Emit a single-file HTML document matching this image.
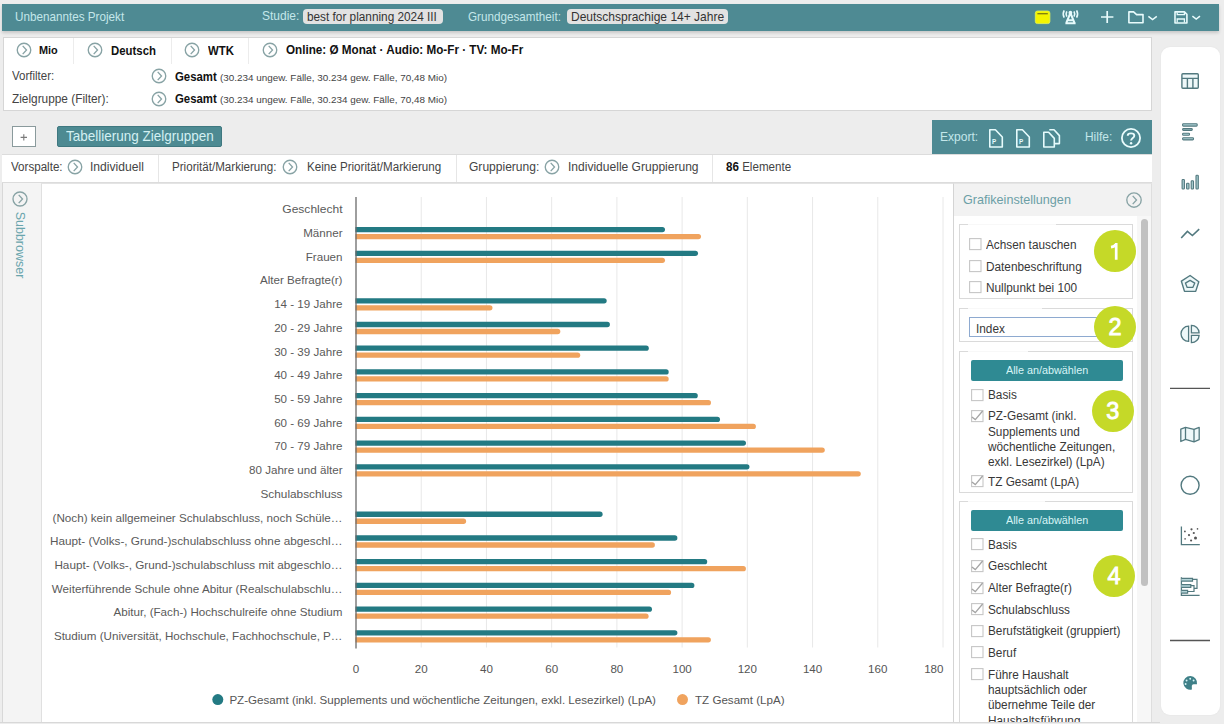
<!DOCTYPE html>
<html><head><meta charset="utf-8">
<style>
*{box-sizing:border-box;margin:0;padding:0}
html,body{width:1224px;height:724px;overflow:hidden;background:#ededed;font-family:"Liberation Sans",sans-serif;color:#333}
.abs{position:absolute}
.t{position:absolute;white-space:nowrap;line-height:1}
</style></head><body>
<div class="abs" style="left:2px;top:4px;width:1217px;height:26.8px;background:#4e8a93;box-shadow:0 2px 3px rgba(0,0,0,0.16)"></div>
<div class="t" style="left:15px;top:10.90px;font-size:12.64px;color:#c4e7ea;font-weight:normal;transform:scaleX(0.9259);transform-origin:0 0;">Unbenanntes Projekt</div>
<div class="t" style="left:262.2px;top:10.43px;font-size:12.96px;color:#c4e7ea;font-weight:normal;transform:scaleX(0.9259);transform-origin:0 0;">Studie:</div>
<div class="abs" style="left:302.6px;top:9px;width:140.4px;height:15px;background:#e2e2e2;border-radius:4px"></div>
<div class="t" style="left:307.3px;top:10.81px;font-size:12.51px;color:#333;font-weight:normal;transform:scaleX(0.9434);transform-origin:0 0;">best for planning 2024 III</div>
<div class="t" style="left:468px;top:10.80px;font-size:12.64px;color:#c4e7ea;font-weight:normal;transform:scaleX(0.9259);transform-origin:0 0;">Grundgesamtheit:</div>
<div class="abs" style="left:566.8px;top:8.7px;width:161.3px;height:15px;background:#e2e2e2;border-radius:4px"></div>
<div class="t" style="left:571.4px;top:10.63px;font-size:12.72px;color:#333;font-weight:normal;transform:scaleX(0.9434);transform-origin:0 0;">Deutschsprachige 14+ Jahre</div>
<div class="abs" style="left:3px;top:37px;width:1149px;height:74px;background:#fff;border:1px solid #d6d6d6"></div>
<div class="abs" style="left:73.0px;top:38px;width:1px;height:26px;background:#ececec"></div>
<div class="abs" style="left:170.9px;top:38px;width:1px;height:26px;background:#ececec"></div>
<div class="abs" style="left:248.1px;top:38px;width:1px;height:26px;background:#ececec"></div>
<svg class="abs" style="left:14.5px;top:40.5px" width="18" height="18" viewBox="0 0 18 18"><circle cx="9" cy="9" r="6.75" fill="none" stroke="#88a3a5" stroke-width="1.35"/><path d="M7.7 4.9 L11.5 9 L7.7 13.1" fill="none" stroke="#88a3a5" stroke-width="1.35" transform="rotate(0 9 9)"/></svg>
<div class="t" style="left:39px;top:45.12px;font-size:11.55px;color:#111;font-weight:bold;transform:scaleX(0.9434);transform-origin:0 0;">Mio</div>
<svg class="abs" style="left:85.6px;top:40.5px" width="18" height="18" viewBox="0 0 18 18"><circle cx="9" cy="9" r="6.75" fill="none" stroke="#88a3a5" stroke-width="1.35"/><path d="M7.7 4.9 L11.5 9 L7.7 13.1" fill="none" stroke="#88a3a5" stroke-width="1.35" transform="rotate(0 9 9)"/></svg>
<div class="t" style="left:110.6px;top:44.67px;font-size:12.08px;color:#111;font-weight:bold;transform:scaleX(0.9434);transform-origin:0 0;">Deutsch</div>
<svg class="abs" style="left:183.3px;top:40.5px" width="18" height="18" viewBox="0 0 18 18"><circle cx="9" cy="9" r="6.75" fill="none" stroke="#88a3a5" stroke-width="1.35"/><path d="M7.7 4.9 L11.5 9 L7.7 13.1" fill="none" stroke="#88a3a5" stroke-width="1.35" transform="rotate(0 9 9)"/></svg>
<div class="t" style="left:208px;top:44.67px;font-size:12.08px;color:#111;font-weight:bold;transform:scaleX(0.9434);transform-origin:0 0;">WTK</div>
<svg class="abs" style="left:260.6px;top:40.5px" width="18" height="18" viewBox="0 0 18 18"><circle cx="9" cy="9" r="6.75" fill="none" stroke="#88a3a5" stroke-width="1.35"/><path d="M7.7 4.9 L11.5 9 L7.7 13.1" fill="none" stroke="#88a3a5" stroke-width="1.35" transform="rotate(0 9 9)"/></svg>
<div class="t" style="left:285.5px;top:44.40px;font-size:12.40px;color:#111;font-weight:bold;transform:scaleX(0.9434);transform-origin:0 0;">Online: Ø Monat · Audio: Mo-Fr · TV: Mo-Fr</div>
<div class="t" style="left:12.2px;top:69.88px;font-size:12.19px;color:#444;font-weight:normal;transform:scaleX(0.9434);transform-origin:0 0;">Vorfilter:</div>
<div class="t" style="left:12.2px;top:92.77px;font-size:12.56px;color:#444;font-weight:normal;transform:scaleX(0.9434);transform-origin:0 0;">Zielgruppe (Filter):</div>
<svg class="abs" style="left:149.6px;top:67.3px" width="18" height="18" viewBox="0 0 18 18"><circle cx="9" cy="9" r="6.75" fill="none" stroke="#88a3a5" stroke-width="1.35"/><path d="M7.7 4.9 L11.5 9 L7.7 13.1" fill="none" stroke="#88a3a5" stroke-width="1.35" transform="rotate(0 9 9)"/></svg>
<div class="t" style="left:174.8px;top:70.87px;font-size:12.08px;color:#111;font-weight:bold;transform:scaleX(0.9434);transform-origin:0 0;">Gesamt</div>
<div class="t" style="left:219.7px;top:72.89px;font-size:9.70px;color:#444;font-weight:normal;transform:scaleX(1.0204);transform-origin:0 0;">(30.234 ungew. Fälle, 30.234 gew. Fälle, 70,48 Mio)</div>
<svg class="abs" style="left:149.6px;top:89.8px" width="18" height="18" viewBox="0 0 18 18"><circle cx="9" cy="9" r="6.75" fill="none" stroke="#88a3a5" stroke-width="1.35"/><path d="M7.7 4.9 L11.5 9 L7.7 13.1" fill="none" stroke="#88a3a5" stroke-width="1.35" transform="rotate(0 9 9)"/></svg>
<div class="t" style="left:174.8px;top:93.37px;font-size:12.08px;color:#111;font-weight:bold;transform:scaleX(0.9434);transform-origin:0 0;">Gesamt</div>
<div class="t" style="left:219.7px;top:95.39px;font-size:9.70px;color:#444;font-weight:normal;transform:scaleX(1.0204);transform-origin:0 0;">(30.234 ungew. Fälle, 30.234 gew. Fälle, 70,48 Mio)</div>
<div class="abs" style="left:12px;top:126px;width:24px;height:21px;border:1.5px solid #8a9a9c;background:#fff"></div>
<svg class="abs" style="left:0;top:0" width="60" height="160"><path d="M23.8 134.2 V140.6 M20.6 137.4 H27" stroke="#7a7a7a" stroke-width="1.1"/></svg>
<div class="abs" style="left:57px;top:126px;width:165px;height:21px;background:#4d8a92;border:1px solid #3f7880;border-radius:2px"></div>
<div class="t" style="left:65.5px;top:128.89px;font-size:14.31px;color:#d3f0f2;font-weight:normal;transform:scaleX(0.9434);transform-origin:0 0;">Tabellierung Zielgruppen</div>
<div class="abs" style="left:932px;top:120px;width:220px;height:34px;background:#4e8a93"></div>
<div class="t" style="left:940.2px;top:130.99px;font-size:12.77px;color:#c4e7ea;font-weight:normal;transform:scaleX(0.9434);transform-origin:0 0;">Export:</div>
<div class="t" style="left:1084.6px;top:131.08px;font-size:12.67px;color:#c4e7ea;font-weight:normal;transform:scaleX(0.9434);transform-origin:0 0;">Hilfe:</div>
<svg class="abs" style="left:1118.9px;top:126px" width="24" height="24" viewBox="0 0 24 24"><circle cx="12" cy="12" r="9.1" fill="none" stroke="#eafcfd" stroke-width="1.8"/><path d="M8.7 9.7 C8.7 6.6 15.3 6.6 15.3 9.7 C15.3 12 12.1 12 12.1 14.6" fill="none" stroke="#eafcfd" stroke-width="1.9"/><circle cx="12.1" cy="17.2" r="1.2" fill="#eafcfd"/></svg>
<svg class="abs" style="left:988.5px;top:128.9px" width="18" height="22" viewBox="0 0 18 22"><path d="M0.8 0.8 H6.4 L13.3 8 V18 H0.8 Z" fill="none" stroke="#e6fbfc" stroke-width="1.6" stroke-linejoin="round"/><text x="3" y="15.3" font-size="6.3" font-weight="bold" fill="#e6fbfc" font-family="Liberation Sans">P</text></svg>
<svg class="abs" style="left:1015.6px;top:128.9px" width="18" height="22" viewBox="0 0 18 22"><path d="M0.8 0.8 H6.4 L13.3 8 V18 H0.8 Z" fill="none" stroke="#e6fbfc" stroke-width="1.6" stroke-linejoin="round"/><text x="3" y="15.3" font-size="6.3" font-weight="bold" fill="#e6fbfc" font-family="Liberation Sans">P</text></svg>
<svg class="abs" style="left:1042.7px;top:128.9px" width="20" height="22" viewBox="0 0 20 22"><path d="M6.3 0.8 H11 L16.4 6.6 V14.6 H12" fill="none" stroke="#e6fbfc" stroke-width="1.6" stroke-linejoin="round"/><path d="M0.8 3.2 H5.6 L11.3 9.4 V18 H0.8 Z" fill="#4e8a93" stroke="#e6fbfc" stroke-width="1.6" stroke-linejoin="round"/></svg>
<div class="abs" style="left:2px;top:154px;width:1150px;height:29px;background:#fff;border-top:1px solid #dcdcdc;border-bottom:1px solid #dcdcdc"></div>
<div class="abs" style="left:158.3px;top:155px;width:1px;height:27px;background:#e6e6e6"></div>
<div class="abs" style="left:456.0px;top:155px;width:1px;height:27px;background:#e6e6e6"></div>
<div class="abs" style="left:712.3px;top:155px;width:1px;height:27px;background:#e6e6e6"></div>
<div class="t" style="left:11px;top:160.99px;font-size:12.30px;color:#444;font-weight:normal;transform:scaleX(0.9434);transform-origin:0 0;">Vorspalte:</div>
<svg class="abs" style="left:65.9px;top:157.5px" width="18" height="18" viewBox="0 0 18 18"><circle cx="9" cy="9" r="6.75" fill="none" stroke="#88a3a5" stroke-width="1.35"/><path d="M7.7 4.9 L11.5 9 L7.7 13.1" fill="none" stroke="#88a3a5" stroke-width="1.35" transform="rotate(0 9 9)"/></svg>
<div class="t" style="left:89.6px;top:160.54px;font-size:12.83px;color:#444;font-weight:normal;transform:scaleX(0.9434);transform-origin:0 0;">Individuell</div>
<div class="t" style="left:172.3px;top:160.99px;font-size:12.30px;color:#444;font-weight:normal;transform:scaleX(0.9434);transform-origin:0 0;">Priorität/Markierung:</div>
<svg class="abs" style="left:281.0px;top:157.5px" width="18" height="18" viewBox="0 0 18 18"><circle cx="9" cy="9" r="6.75" fill="none" stroke="#88a3a5" stroke-width="1.35"/><path d="M7.7 4.9 L11.5 9 L7.7 13.1" fill="none" stroke="#88a3a5" stroke-width="1.35" transform="rotate(0 9 9)"/></svg>
<div class="t" style="left:306.5px;top:160.99px;font-size:12.30px;color:#444;font-weight:normal;transform:scaleX(0.9434);transform-origin:0 0;">Keine Priorität/Markierung</div>
<div class="t" style="left:469.2px;top:160.59px;font-size:12.77px;color:#444;font-weight:normal;transform:scaleX(0.9434);transform-origin:0 0;">Gruppierung:</div>
<svg class="abs" style="left:543.0px;top:157.5px" width="18" height="18" viewBox="0 0 18 18"><circle cx="9" cy="9" r="6.75" fill="none" stroke="#88a3a5" stroke-width="1.35"/><path d="M7.7 4.9 L11.5 9 L7.7 13.1" fill="none" stroke="#88a3a5" stroke-width="1.35" transform="rotate(0 9 9)"/></svg>
<div class="t" style="left:567.6px;top:160.59px;font-size:12.77px;color:#444;font-weight:normal;transform:scaleX(0.9434);transform-origin:0 0;">Individuelle Gruppierung</div>
<div class="t" style="left:725.8px;top:160.99px;font-size:12.30px;color:#444;font-weight:normal;transform:scaleX(0.9434);transform-origin:0 0;"><b style="color:#111">86</b> Elemente</div>
<div class="abs" style="left:2px;top:183px;width:39px;height:540px;background:#f4f4f4;border-left:1px solid #d8d8d8"></div>
<div class="abs" style="left:41px;top:183px;width:912px;height:540px;background:#fff;border-left:1px solid #e0e0e0;border-top:1px solid #e4e4e4;border-bottom:1px solid #dadada"></div>
<svg class="abs" style="left:10.8px;top:189.6px" width="18" height="18" viewBox="0 0 18 18"><circle cx="9" cy="9" r="7.0" fill="none" stroke="#88a3a5" stroke-width="1.35"/><path d="M7.7 4.9 L11.5 9 L7.7 13.1" fill="none" stroke="#88a3a5" stroke-width="1.35" transform="rotate(0 9 9)"/></svg>
<div class="t" style="left:-15px;top:239px;width:70px;font-size:12.5px;color:#6aa5ad;transform:rotate(90deg);transform-origin:35px 6px;text-align:center">Subbrowser</div>
<svg class="abs" style="left:0;top:0" width="1224" height="724" font-family="Liberation Sans, sans-serif">
<line x1="421.22" y1="197" x2="421.22" y2="647.5" stroke="#e8e8e8" stroke-width="1"/>
<line x1="486.44" y1="197" x2="486.44" y2="647.5" stroke="#e8e8e8" stroke-width="1"/>
<line x1="551.67" y1="197" x2="551.67" y2="647.5" stroke="#e8e8e8" stroke-width="1"/>
<line x1="616.89" y1="197" x2="616.89" y2="647.5" stroke="#e8e8e8" stroke-width="1"/>
<line x1="682.11" y1="197" x2="682.11" y2="647.5" stroke="#e8e8e8" stroke-width="1"/>
<line x1="747.33" y1="197" x2="747.33" y2="647.5" stroke="#e8e8e8" stroke-width="1"/>
<line x1="812.56" y1="197" x2="812.56" y2="647.5" stroke="#e8e8e8" stroke-width="1"/>
<line x1="877.78" y1="197" x2="877.78" y2="647.5" stroke="#e8e8e8" stroke-width="1"/>
<line x1="943.00" y1="197" x2="943.00" y2="647.5" stroke="#e8e8e8" stroke-width="1"/>
<rect x="353.00" y="226.97" width="312.00" height="5.3" rx="2.65" fill="#237a83"/>
<rect x="353.00" y="233.97" width="348.00" height="5.3" rx="2.65" fill="#f0a35e"/>
<rect x="353.00" y="250.69" width="345.00" height="5.3" rx="2.65" fill="#237a83"/>
<rect x="353.00" y="257.69" width="312.00" height="5.3" rx="2.65" fill="#f0a35e"/>
<rect x="353.00" y="298.13" width="253.70" height="5.3" rx="2.65" fill="#237a83"/>
<rect x="353.00" y="305.13" width="139.50" height="5.3" rx="2.65" fill="#f0a35e"/>
<rect x="353.00" y="321.85" width="256.90" height="5.3" rx="2.65" fill="#237a83"/>
<rect x="353.00" y="328.85" width="207.30" height="5.3" rx="2.65" fill="#f0a35e"/>
<rect x="353.00" y="345.57" width="295.80" height="5.3" rx="2.65" fill="#237a83"/>
<rect x="353.00" y="352.57" width="227.20" height="5.3" rx="2.65" fill="#f0a35e"/>
<rect x="353.00" y="369.29" width="315.70" height="5.3" rx="2.65" fill="#237a83"/>
<rect x="353.00" y="376.29" width="315.70" height="5.3" rx="2.65" fill="#f0a35e"/>
<rect x="353.00" y="393.01" width="344.80" height="5.3" rx="2.65" fill="#237a83"/>
<rect x="353.00" y="400.01" width="358.00" height="5.3" rx="2.65" fill="#f0a35e"/>
<rect x="353.00" y="416.73" width="367.00" height="5.3" rx="2.65" fill="#237a83"/>
<rect x="353.00" y="423.73" width="402.90" height="5.3" rx="2.65" fill="#f0a35e"/>
<rect x="353.00" y="440.45" width="393.00" height="5.3" rx="2.65" fill="#237a83"/>
<rect x="353.00" y="447.45" width="471.80" height="5.3" rx="2.65" fill="#f0a35e"/>
<rect x="353.00" y="464.17" width="396.50" height="5.3" rx="2.65" fill="#237a83"/>
<rect x="353.00" y="471.17" width="507.80" height="5.3" rx="2.65" fill="#f0a35e"/>
<rect x="353.00" y="511.61" width="249.60" height="5.3" rx="2.65" fill="#237a83"/>
<rect x="353.00" y="518.61" width="113.10" height="5.3" rx="2.65" fill="#f0a35e"/>
<rect x="353.00" y="535.33" width="324.40" height="5.3" rx="2.65" fill="#237a83"/>
<rect x="353.00" y="542.33" width="301.90" height="5.3" rx="2.65" fill="#f0a35e"/>
<rect x="353.00" y="559.05" width="354.20" height="5.3" rx="2.65" fill="#237a83"/>
<rect x="353.00" y="566.05" width="392.90" height="5.3" rx="2.65" fill="#f0a35e"/>
<rect x="353.00" y="582.77" width="341.40" height="5.3" rx="2.65" fill="#237a83"/>
<rect x="353.00" y="589.77" width="318.10" height="5.3" rx="2.65" fill="#f0a35e"/>
<rect x="353.00" y="606.49" width="299.00" height="5.3" rx="2.65" fill="#237a83"/>
<rect x="353.00" y="613.49" width="295.60" height="5.3" rx="2.65" fill="#f0a35e"/>
<rect x="353.00" y="630.21" width="324.40" height="5.3" rx="2.65" fill="#237a83"/>
<rect x="353.00" y="637.21" width="357.90" height="5.3" rx="2.65" fill="#f0a35e"/>
<rect x="43" y="190" width="312.4" height="460" fill="#fff"/>
<line x1="356.00" y1="197" x2="356.00" y2="648.5" stroke="#6a6a6a" stroke-width="1.3"/>
<text x="342.5" y="213.25" text-anchor="end" font-size="11.6" fill="#5a5a5a" textLength="60.2" lengthAdjust="spacingAndGlyphs">Geschlecht</text>
<text x="342.5" y="236.97" text-anchor="end" font-size="11.6" fill="#5a5a5a">Männer</text>
<text x="342.5" y="260.69" text-anchor="end" font-size="11.6" fill="#5a5a5a">Frauen</text>
<text x="342.5" y="284.41" text-anchor="end" font-size="11.6" fill="#5a5a5a">Alter Befragte(r)</text>
<text x="342.5" y="308.13" text-anchor="end" font-size="11.6" fill="#5a5a5a">14 - 19 Jahre</text>
<text x="342.5" y="331.85" text-anchor="end" font-size="11.6" fill="#5a5a5a">20 - 29 Jahre</text>
<text x="342.5" y="355.57" text-anchor="end" font-size="11.6" fill="#5a5a5a">30 - 39 Jahre</text>
<text x="342.5" y="379.29" text-anchor="end" font-size="11.6" fill="#5a5a5a">40 - 49 Jahre</text>
<text x="342.5" y="403.01" text-anchor="end" font-size="11.6" fill="#5a5a5a">50 - 59 Jahre</text>
<text x="342.5" y="426.73" text-anchor="end" font-size="11.6" fill="#5a5a5a">60 - 69 Jahre</text>
<text x="342.5" y="450.45" text-anchor="end" font-size="11.6" fill="#5a5a5a">70 - 79 Jahre</text>
<text x="342.5" y="474.17" text-anchor="end" font-size="11.6" fill="#5a5a5a">80 Jahre und älter</text>
<text x="342.5" y="497.89" text-anchor="end" font-size="11.6" fill="#5a5a5a" textLength="82.0" lengthAdjust="spacingAndGlyphs">Schulabschluss</text>
<text x="342.5" y="521.61" text-anchor="end" font-size="11.6" fill="#5a5a5a" textLength="290.0" lengthAdjust="spacingAndGlyphs">(Noch) kein allgemeiner Schulabschluss, noch Schüle…</text>
<text x="342.5" y="545.33" text-anchor="end" font-size="11.6" fill="#5a5a5a" textLength="292.6" lengthAdjust="spacingAndGlyphs">Haupt- (Volks-, Grund-)schulabschluss ohne abgeschl…</text>
<text x="342.5" y="569.05" text-anchor="end" font-size="11.6" fill="#5a5a5a" textLength="288.1" lengthAdjust="spacingAndGlyphs">Haupt- (Volks-, Grund-)schulabschluss mit abgeschlo…</text>
<text x="342.5" y="592.77" text-anchor="end" font-size="11.6" fill="#5a5a5a" textLength="290.7" lengthAdjust="spacingAndGlyphs">Weiterführende Schule ohne Abitur (Realschulabschlu…</text>
<text x="342.5" y="616.49" text-anchor="end" font-size="11.6" fill="#5a5a5a" textLength="229.1" lengthAdjust="spacingAndGlyphs">Abitur, (Fach-) Hochschulreife ohne Studium</text>
<text x="342.5" y="640.21" text-anchor="end" font-size="11.6" fill="#5a5a5a" textLength="288.6" lengthAdjust="spacingAndGlyphs">Studium (Universität, Hochschule, Fachhochschule, P…</text>
<text x="356.00" y="672.6" text-anchor="middle" font-size="11.6" fill="#555">0</text>
<text x="421.22" y="672.6" text-anchor="middle" font-size="11.6" fill="#555">20</text>
<text x="486.44" y="672.6" text-anchor="middle" font-size="11.6" fill="#555">40</text>
<text x="551.67" y="672.6" text-anchor="middle" font-size="11.6" fill="#555">60</text>
<text x="616.89" y="672.6" text-anchor="middle" font-size="11.6" fill="#555">80</text>
<text x="682.11" y="672.6" text-anchor="middle" font-size="11.6" fill="#555">100</text>
<text x="747.33" y="672.6" text-anchor="middle" font-size="11.6" fill="#555">120</text>
<text x="812.56" y="672.6" text-anchor="middle" font-size="11.6" fill="#555">140</text>
<text x="877.78" y="672.6" text-anchor="middle" font-size="11.6" fill="#555">160</text>
<text x="943.5" y="672.6" text-anchor="end" font-size="11.6" fill="#555">180</text>
<circle cx="217.8" cy="699.6" r="5.5" fill="#237a83"/>
<text x="229.4" y="703.8" font-size="11.6" fill="#555">PZ-Gesamt (inkl. Supplements und wöchentliche Zeitungen, exkl. Lesezirkel) (LpA)</text>
<circle cx="682.5" cy="699.6" r="5.5" fill="#f0a35e"/>
<text x="695" y="703.8" font-size="11.6" fill="#555">TZ Gesamt (LpA)</text>
</svg>
<div class="abs" style="left:952.5px;top:183px;width:199.5px;height:540px;background:#f2f2f2;border-left:1px solid #d4d4d4;border-right:1px solid #dedede;border-top:1px solid #e4e4e4"></div>
<div class="abs" style="left:954px;top:216px;width:183px;height:507px;background:#fff"></div>
<div class="abs" style="left:1161px;top:47px;width:58.5px;height:667.5px;background:#fff;border-radius:9px;box-shadow:0 0 2px rgba(0,0,0,0.06)"></div>
<svg class="abs" style="left:0;top:0" width="1224" height="34"><rect x="1035.3" y="11" width="14.6" height="12.6" rx="2.2" fill="#f4f400" stroke="#e2f25a" stroke-width="0.8"/><line x1="1037.4" y1="13.7" x2="1047.8" y2="13.7" stroke="#7c7a10" stroke-width="1.3"/><path d="M1064.2 10.4 Q1062.2 14 1064.2 17.6 M1066.8 11.4 Q1065.4 14 1066.8 16.6 M1076.6 10.4 Q1078.6 14 1076.6 17.6 M1074 11.4 Q1075.4 14 1074 16.6" fill="none" stroke="#e8fbfc" stroke-width="1.6"/><path d="M1070.4 13 L1066.2 23.2 M1070.4 13 L1074.6 23.2 M1067.8 20.2 H1073 M1065.4 23.2 H1075.6" fill="none" stroke="#e8fbfc" stroke-width="2"/><circle cx="1070.4" cy="12.7" r="1.9" fill="#e8fbfc"/><path d="M1107.2 11.1 V23.1 M1101 17 H1113.4" stroke="#e8fbfc" stroke-width="1.7"/><path d="M1128.9 11.9 H1133.6 L1136.6 14.6 H1143 V22.8 H1128.9 Z" fill="none" stroke="#e8fbfc" stroke-width="1.6" stroke-linejoin="round"/><path d="M1148.4 16.3 L1152.6 19.6 L1156.8 16.3" fill="none" stroke="#e8fbfc" stroke-width="1.5"/><path d="M1175 11.9 H1184.4 L1186.9 14.4 V23 H1175 Z" fill="none" stroke="#e8fbfc" stroke-width="1.6" stroke-linejoin="round"/><path d="M1177.2 12.4 V14.6 H1184.4 V12.4 M1177.2 22.6 V19 H1184.4 V22.6" fill="none" stroke="#e8fbfc" stroke-width="1.3"/><path d="M1192.4 16.1 L1196.2 19.1 L1200 16.1" fill="none" stroke="#e8fbfc" stroke-width="1.5"/></svg>
<div class="t" style="left:963.4px;top:192.79px;font-size:13.36px;color:#6c9fa6;font-weight:normal;transform:scaleX(0.9434);transform-origin:0 0;">Grafikeinstellungen</div>
<svg class="abs" style="left:1125.3px;top:190.6px" width="18" height="18" viewBox="0 0 18 18"><circle cx="9" cy="9" r="7.2" fill="none" stroke="#88a3a5" stroke-width="1.35"/><path d="M7.7 4.9 L11.5 9 L7.7 13.1" fill="none" stroke="#88a3a5" stroke-width="1.35" transform="rotate(0 9 9)"/></svg>
<div class="abs" style="left:1137px;top:216px;width:15px;height:507px;background:#f7f7f7;border-right:1px solid #dedede"></div>
<div class="abs" style="left:1141px;top:219px;width:7px;height:367px;background:#c1c1c1;border-radius:3.5px"></div>
<div class="abs" style="left:959px;top:224.4px;width:174px;height:74.20000000000002px;border:1px solid #dadada"></div><div class="abs" style="left:968px;top:224.4px;width:88px;height:1px;background:#f8f8f8"></div>
<div class="abs" style="left:959px;top:307.5px;width:174px;height:34.69999999999999px;border:1px solid #dadada"></div><div class="abs" style="left:968px;top:307.5px;width:74px;height:1px;background:#f8f8f8"></div>
<div class="abs" style="left:959px;top:351px;width:174px;height:141.60000000000002px;border:1px solid #dadada"></div><div class="abs" style="left:968px;top:351px;width:60px;height:1px;background:#f8f8f8"></div>
<div class="abs" style="left:959px;top:501px;width:174px;height:229px;border:1px solid #dadada"></div><div class="abs" style="left:968px;top:501px;width:77px;height:1px;background:#f8f8f8"></div>
<svg class="abs" style="left:969.2px;top:238.1px" width="13" height="13" viewBox="0 0 13 13"><rect x="0.6" y="0.6" width="11.4" height="11" fill="#fff" stroke="#c6c6c6" stroke-width="1.1"/></svg>
<div class="t" style="left:986.2px;top:238.71px;font-size:12.51px;color:#383838;font-weight:normal;transform:scaleX(0.9434);transform-origin:0 0;">Achsen tauschen</div>
<svg class="abs" style="left:969.2px;top:259.9px" width="13" height="13" viewBox="0 0 13 13"><rect x="0.6" y="0.6" width="11.4" height="11" fill="#fff" stroke="#c6c6c6" stroke-width="1.1"/></svg>
<div class="t" style="left:986.2px;top:260.51px;font-size:12.51px;color:#383838;font-weight:normal;transform:scaleX(0.9434);transform-origin:0 0;">Datenbeschriftung</div>
<svg class="abs" style="left:969.2px;top:281.4px" width="13" height="13" viewBox="0 0 13 13"><rect x="0.6" y="0.6" width="11.4" height="11" fill="#fff" stroke="#c6c6c6" stroke-width="1.1"/></svg>
<div class="t" style="left:986.2px;top:282.01px;font-size:12.51px;color:#383838;font-weight:normal;transform:scaleX(0.9434);transform-origin:0 0;">Nullpunkt bei 100</div>
<div class="abs" style="left:968.7px;top:316.8px;width:140px;height:20.6px;border:1px solid #8eaad0;background:#fff"></div>
<div class="t" style="left:975.5px;top:323.01px;font-size:12.51px;color:#383838;font-weight:normal;transform:scaleX(0.9434);transform-origin:0 0;">Index</div>
<div class="abs" style="left:970.6px;top:360px;width:152.4px;height:21.1px;background:#2f8a93;border-radius:2px"></div>
<div class="t" style="left:1006px;top:365.41px;font-size:11.45px;color:#d8f4f6;font-weight:normal;transform:scaleX(0.9434);transform-origin:0 0;">Alle an/abwählen</div>
<svg class="abs" style="left:971px;top:388.8px" width="13" height="13" viewBox="0 0 13 13"><rect x="0.6" y="0.6" width="11.4" height="11" fill="#fff" stroke="#c6c6c6" stroke-width="1.1"/></svg>
<div class="t" style="left:987.6px;top:388.81px;font-size:12.51px;color:#383838;font-weight:normal;transform:scaleX(0.9434);transform-origin:0 0;">Basis</div>
<svg class="abs" style="left:971px;top:410.3px" width="13" height="13" viewBox="0 0 13 13"><rect x="0.6" y="0.6" width="11.4" height="11" fill="#fff" stroke="#c6c6c6" stroke-width="1.1"/><path d="M0.9 6.9 L4.3 9.6 L11.6 1" fill="none" stroke="#a4a4a4" stroke-width="1.3"/></svg>
<div class="t" style="left:987.6px;top:410.31px;font-size:12.51px;color:#383838;font-weight:normal;transform:scaleX(0.9434);transform-origin:0 0;">PZ-Gesamt (inkl.</div>
<div class="t" style="left:987.6px;top:425.81px;font-size:12.51px;color:#383838;font-weight:normal;transform:scaleX(0.9434);transform-origin:0 0;">Supplements und</div>
<div class="t" style="left:987.6px;top:441.01px;font-size:12.51px;color:#383838;font-weight:normal;transform:scaleX(0.9434);transform-origin:0 0;">wöchentliche Zeitungen,</div>
<div class="t" style="left:987.6px;top:456.31px;font-size:12.51px;color:#383838;font-weight:normal;transform:scaleX(0.9434);transform-origin:0 0;">exkl. Lesezirkel) (LpA)</div>
<svg class="abs" style="left:971px;top:475.1px" width="13" height="13" viewBox="0 0 13 13"><rect x="0.6" y="0.6" width="11.4" height="11" fill="#fff" stroke="#c6c6c6" stroke-width="1.1"/><path d="M0.9 6.9 L4.3 9.6 L11.6 1" fill="none" stroke="#a4a4a4" stroke-width="1.3"/></svg>
<div class="t" style="left:987.6px;top:475.61px;font-size:12.51px;color:#383838;font-weight:normal;transform:scaleX(0.9434);transform-origin:0 0;">TZ Gesamt (LpA)</div>
<div class="abs" style="left:970.6px;top:510.2px;width:152.4px;height:20.6px;background:#2f8a93;border-radius:2px"></div>
<div class="t" style="left:1006px;top:515.41px;font-size:11.45px;color:#d8f4f6;font-weight:normal;transform:scaleX(0.9434);transform-origin:0 0;">Alle an/abwählen</div>
<svg class="abs" style="left:971px;top:538.1999999999999px" width="13" height="13" viewBox="0 0 13 13"><rect x="0.6" y="0.6" width="11.4" height="11" fill="#fff" stroke="#c6c6c6" stroke-width="1.1"/></svg>
<div class="t" style="left:987.8px;top:538.71px;font-size:12.51px;color:#383838;font-weight:normal;transform:scaleX(0.9434);transform-origin:0 0;">Basis</div>
<svg class="abs" style="left:971px;top:559.8499999999999px" width="13" height="13" viewBox="0 0 13 13"><rect x="0.6" y="0.6" width="11.4" height="11" fill="#fff" stroke="#c6c6c6" stroke-width="1.1"/><path d="M0.9 6.9 L4.3 9.6 L11.6 1" fill="none" stroke="#a4a4a4" stroke-width="1.3"/></svg>
<div class="t" style="left:987.8px;top:560.36px;font-size:12.51px;color:#383838;font-weight:normal;transform:scaleX(0.9434);transform-origin:0 0;">Geschlecht</div>
<svg class="abs" style="left:971px;top:581.4999999999999px" width="13" height="13" viewBox="0 0 13 13"><rect x="0.6" y="0.6" width="11.4" height="11" fill="#fff" stroke="#c6c6c6" stroke-width="1.1"/><path d="M0.9 6.9 L4.3 9.6 L11.6 1" fill="none" stroke="#a4a4a4" stroke-width="1.3"/></svg>
<div class="t" style="left:987.8px;top:582.01px;font-size:12.51px;color:#383838;font-weight:normal;transform:scaleX(0.9434);transform-origin:0 0;">Alter Befragte(r)</div>
<svg class="abs" style="left:971px;top:603.1499999999999px" width="13" height="13" viewBox="0 0 13 13"><rect x="0.6" y="0.6" width="11.4" height="11" fill="#fff" stroke="#c6c6c6" stroke-width="1.1"/><path d="M0.9 6.9 L4.3 9.6 L11.6 1" fill="none" stroke="#a4a4a4" stroke-width="1.3"/></svg>
<div class="t" style="left:987.8px;top:603.66px;font-size:12.51px;color:#383838;font-weight:normal;transform:scaleX(0.9434);transform-origin:0 0;">Schulabschluss</div>
<svg class="abs" style="left:971px;top:624.8px" width="13" height="13" viewBox="0 0 13 13"><rect x="0.6" y="0.6" width="11.4" height="11" fill="#fff" stroke="#c6c6c6" stroke-width="1.1"/></svg>
<div class="t" style="left:987.8px;top:625.31px;font-size:12.51px;color:#383838;font-weight:normal;transform:scaleX(0.9434);transform-origin:0 0;">Berufstätigkeit (gruppiert)</div>
<svg class="abs" style="left:971px;top:646.4499999999999px" width="13" height="13" viewBox="0 0 13 13"><rect x="0.6" y="0.6" width="11.4" height="11" fill="#fff" stroke="#c6c6c6" stroke-width="1.1"/></svg>
<div class="t" style="left:987.8px;top:646.96px;font-size:12.51px;color:#383838;font-weight:normal;transform:scaleX(0.9434);transform-origin:0 0;">Beruf</div>
<svg class="abs" style="left:971px;top:668.0999999999999px" width="13" height="13" viewBox="0 0 13 13"><rect x="0.6" y="0.6" width="11.4" height="11" fill="#fff" stroke="#c6c6c6" stroke-width="1.1"/></svg>
<div class="t" style="left:987.8px;top:668.61px;font-size:12.51px;color:#383838;font-weight:normal;transform:scaleX(0.9434);transform-origin:0 0;">Führe Haushalt</div>
<div class="t" style="left:987.8px;top:683.91px;font-size:12.51px;color:#383838;font-weight:normal;transform:scaleX(0.9434);transform-origin:0 0;">hauptsächlich oder</div>
<div class="t" style="left:987.8px;top:699.21px;font-size:12.51px;color:#383838;font-weight:normal;transform:scaleX(0.9434);transform-origin:0 0;">übernehme Teile der</div>
<div class="t" style="left:987.8px;top:714.51px;font-size:12.51px;color:#383838;font-weight:normal;transform:scaleX(0.9434);transform-origin:0 0;">Haushaltsführung</div>
<div class="abs" style="left:1094.1px;top:230.0px;width:42.2px;height:42.2px;border-radius:50%;background:#c5d928"></div><div class="t" style="left:1100.2px;top:240.1px;width:30px;text-align:center;font-size:23.5px;color:#fff;font-weight:normal;-webkit-text-stroke:0.9px #fff"></div>
<svg class="abs" style="left:1100px;top:236px" width="30" height="30"><path d="M16.2 7 V23.7 M16.2 7.6 Q14.8 10.6 11 11.2" fill="none" stroke="#fff" stroke-width="2.7"/></svg>
<div class="abs" style="left:1093.9px;top:306.2px;width:42.2px;height:42.2px;border-radius:50%;background:#c5d928"></div><div class="t" style="left:1100.0px;top:316.3px;width:30px;text-align:center;font-size:23.5px;color:#fff;font-weight:normal;-webkit-text-stroke:0.9px #fff">2</div>
<div class="abs" style="left:1091.8px;top:389.9px;width:42.2px;height:42.2px;border-radius:50%;background:#c5d928"></div><div class="t" style="left:1097.9px;top:400.0px;width:30px;text-align:center;font-size:23.5px;color:#fff;font-weight:normal;-webkit-text-stroke:0.9px #fff">3</div>
<div class="abs" style="left:1092.9px;top:555.1px;width:42.2px;height:42.2px;border-radius:50%;background:#c5d928"></div><div class="t" style="left:1099.0px;top:565.2px;width:30px;text-align:center;font-size:23.5px;color:#fff;font-weight:normal;-webkit-text-stroke:0.9px #fff">4</div>
<div class="abs" style="left:0px;top:722px;width:1160px;height:2px;background:#ededed;border-top:1px solid #d8d8d8"></div>
<svg class="abs" style="left:0;top:0" width="1224" height="724">
<rect x="1181.9" y="73.8" width="16.4" height="14.4" rx="1" fill="#eef8f9" stroke="#52797f" stroke-width="1.4"/>
<path d="M1181.9 78.4 H1198.3 M1187.4 78.4 V88.2 M1192.9 78.4 V88.2" stroke="#52797f" stroke-width="1.4"/>
<rect x="1182.6" y="123.7" width="14.6" height="2.4" rx="0.8" fill="#a9cdd1" stroke="#52797f" stroke-width="1.1"/>
<rect x="1182.6" y="128.60000000000002" width="9.7" height="1.8" rx="0.8" fill="#a9cdd1" stroke="#52797f" stroke-width="1.1"/>
<rect x="1182.6" y="133.3" width="6.9" height="1.9" rx="0.8" fill="#a9cdd1" stroke="#52797f" stroke-width="1.1"/>
<rect x="1182.6" y="137.70000000000002" width="10.9" height="2.2" rx="0.8" fill="#a9cdd1" stroke="#52797f" stroke-width="1.1"/>
<rect x="1182.1" y="179.5" width="2.3" height="9.5" rx="0.8" fill="#a9cdd1" stroke="#52797f" stroke-width="1.1"/>
<rect x="1186.6" y="183.2" width="2.4" height="5.8" rx="0.8" fill="#a9cdd1" stroke="#52797f" stroke-width="1.1"/>
<rect x="1191.2" y="180.7" width="2.3" height="8.3" rx="0.8" fill="#a9cdd1" stroke="#52797f" stroke-width="1.1"/>
<rect x="1196.0" y="175.3" width="2.3" height="13.7" rx="0.8" fill="#a9cdd1" stroke="#52797f" stroke-width="1.1"/>
<path d="M1181.2 238 L1187.4 231.4 L1192.4 235.5 L1199.2 229.1" fill="none" stroke="#52797f" stroke-width="1.6"/>
<path d="M1190.1 275.5 L1198.8 281.8 L1195.7 291.4 L1184.5 291.4 L1181.4 281.2 Z" fill="#eef8f9" stroke="#52797f" stroke-width="1.4" stroke-linejoin="round"/>
<path d="M1190.1 280.4 L1194.8 283.1 L1192.8 287.4 L1187.2 287.4 L1185.4 283.1 Z" fill="none" stroke="#52797f" stroke-width="1.3" stroke-linejoin="round"/>
<path d="M1188.6 326.2 A7.6 7.6 0 0 0 1188.6 341.4 Z" fill="#eef8f9" stroke="#52797f" stroke-width="1.3"/>
<path d="M1191.4 325.4 V332.8 H1199.1 A7.7 7.7 0 0 0 1191.4 325.4 Z" fill="#eef8f9" stroke="#52797f" stroke-width="1.3"/>
<path d="M1191.4 342.6 V335.4 H1199.1 A7.5 7.5 0 0 1 1191.4 342.6 Z" fill="#eef8f9" stroke="#52797f" stroke-width="1.3"/>
<line x1="1170" y1="388.4" x2="1210" y2="388.4" stroke="#555" stroke-width="1.4"/>
<path d="M1180.8 429.1 L1185.5 427.4 L1194 429.3 L1199.2 427.4 V439.7 L1194 441.9 L1185.5 439.4 L1180.8 441.5 Z" fill="#eef8f9" stroke="#52797f" stroke-width="1.3" stroke-linejoin="round"/>
<path d="M1185.5 427.4 V439.4 M1194 429.3 V441.9" stroke="#52797f" stroke-width="1.3"/>
<circle cx="1190.1" cy="485.3" r="9" fill="none" stroke="#52797f" stroke-width="1.4"/>
<path d="M1181.4 526.4 V544.6 H1199.8" fill="none" stroke="#52797f" stroke-width="1.3"/>
<circle cx="1191.5" cy="529.3" r="1.1" fill="#555"/>
<circle cx="1197.5" cy="528.9" r="0.8" fill="#555"/>
<circle cx="1184.9" cy="531.4" r="0.9" fill="#555"/>
<circle cx="1193.8" cy="533.0" r="1.1" fill="#555"/>
<circle cx="1189.0" cy="535.1" r="1.1" fill="#555"/>
<circle cx="1195.5" cy="538.0" r="1.5" fill="#555"/>
<circle cx="1185.1" cy="538.9" r="0.8" fill="#555"/>
<circle cx="1191.1" cy="540.5" r="1.1" fill="#555"/>
<path d="M1181.4 577.2 V595.4 H1199.6" fill="none" stroke="#52797f" stroke-width="1.3"/>
<path d="M1181.4 578.4 H1192.5 V581.1 H1181.4 M1181.4 584.6 H1190.8 V587.3 H1181.4 M1181.4 590.4 H1187.6 V593.1 H1181.4" fill="#b6d6da" stroke="#52797f" stroke-width="1.2"/>
<path d="M1192.5 579.4 H1197 V588.4 H1194 M1190.8 585.6 H1194 V591.5 H1187.6" fill="none" stroke="#52797f" stroke-width="1.2"/>
<line x1="1170" y1="640.5" x2="1210" y2="640.5" stroke="#555" stroke-width="1.4"/>
<path d="M1197 684.2 A6.9 6.9 0 1 0 1191.9 689.6 L1191.8 685.7 Q1192.5 684.3 1193.8 684.3 Z" fill="#3f8088"/>
<circle cx="1186.6" cy="680.5" r="0.95" fill="#d8f6f8"/>
<circle cx="1190.2" cy="678.8" r="0.95" fill="#d8f6f8"/>
<circle cx="1193.6" cy="680.5" r="0.95" fill="#d8f6f8"/>
<circle cx="1185.6" cy="684.0" r="0.95" fill="#d8f6f8"/>
</svg>
</body></html>
